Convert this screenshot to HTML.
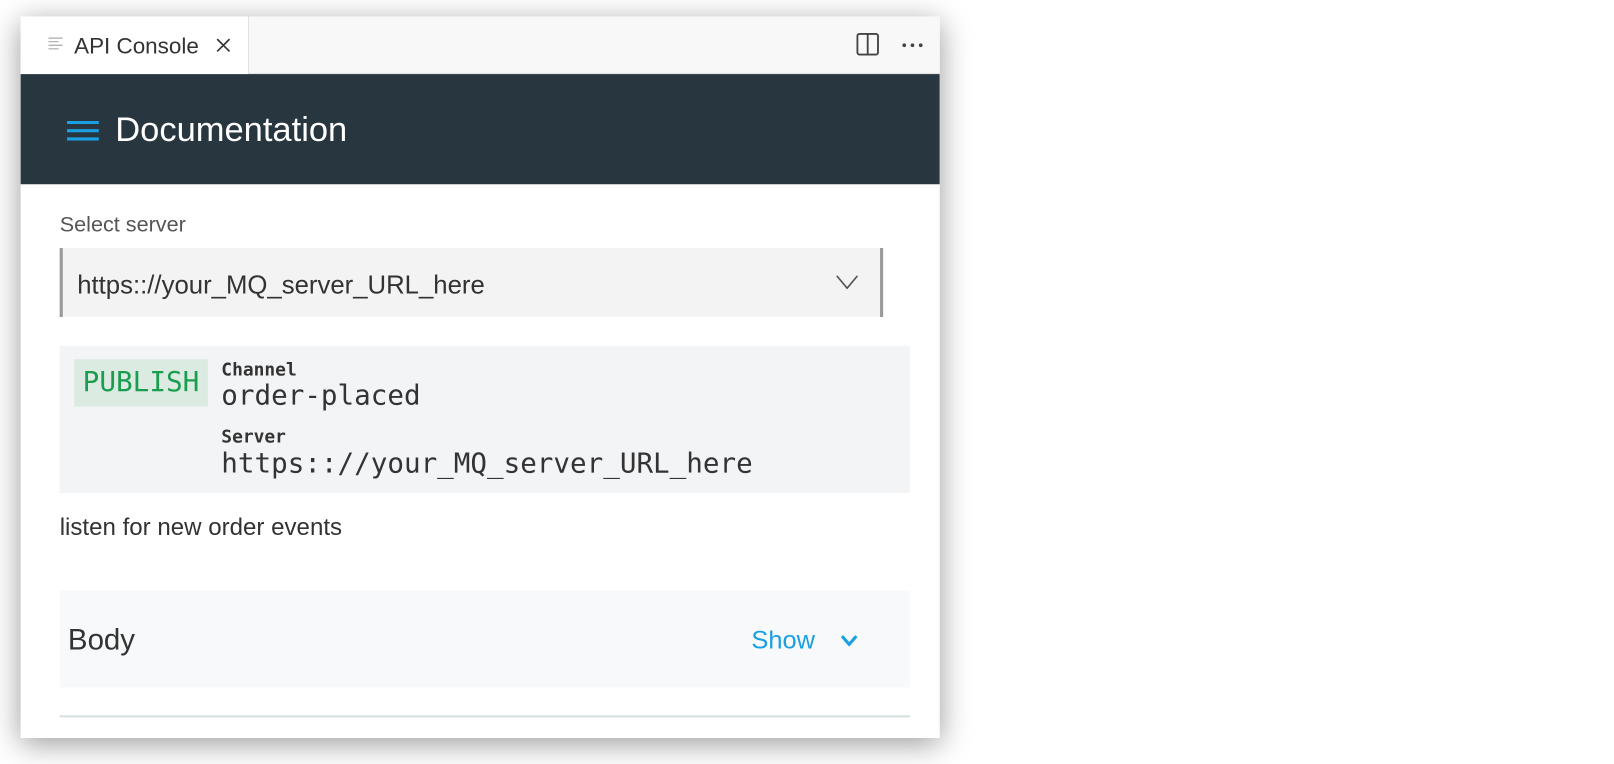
<!DOCTYPE html>
<html><head><style>
*{margin:0;padding:0;box-sizing:border-box}
body{width:1614px;height:764px;background:#fff;position:relative;overflow:hidden;font-family:"Liberation Sans",sans-serif}
.wrap{position:absolute;left:0;top:0;width:1568px;height:742px;transform:scale(1.0293);transform-origin:0 0}
.win{position:absolute;left:20px;top:16px;width:893px;height:701px;background:#fff;box-shadow:0 6px 28px rgba(0,0,0,.4);overflow:hidden}
.tabbar{position:absolute;left:0;top:0;width:893px;height:56px;background:#f8f8f8;border-bottom:1px solid #ddd}
.tab{position:absolute;left:0;top:0;width:222px;height:56px;background:#fff;border-right:1px solid #e0e0e0}
.hdr{position:absolute;left:0;top:56px;width:893px;height:107px;background:#283640}
.abs{position:absolute;white-space:nowrap}
.mono{font-family:"DejaVu Sans Mono","Liberation Mono",monospace}
</style></head><body>
<div class="wrap">
<div class="win">
 <div class="tabbar">
  <div class="tab">
   <svg class="abs" style="left:27px;top:20px" width="14" height="12"><g stroke="#aaa" stroke-width="1.2"><line x1="0" y1="1" x2="14" y2="1"/><line x1="0" y1="4.5" x2="10" y2="4.5"/><line x1="0" y1="8" x2="14" y2="8"/><line x1="0" y1="11.5" x2="10" y2="11.5"/></g></svg>
   <div class="abs" style="left:52px;top:16px;font-size:21.8px;color:#333">API Console</div>
   <svg class="abs" style="left:189px;top:20px" width="16" height="16"><path d="M2 2L14 14M14 2L2 14" stroke="#333" stroke-width="1.6"/></svg>
  </div>
  <svg class="abs" style="left:812px;top:16px" width="22" height="22"><rect x="1" y="1" width="20" height="20" rx="2" fill="none" stroke="#444" stroke-width="1.8"/><line x1="11" y1="1" x2="11" y2="21" stroke="#444" stroke-width="1.8"/></svg>
  <svg class="abs" style="left:856px;top:25px" width="22" height="6"><circle cx="2.5" cy="3" r="1.8" fill="#444"/><circle cx="10.5" cy="3" r="1.8" fill="#444"/><circle cx="18.5" cy="3" r="1.8" fill="#444"/></svg>
 </div>
 <div class="hdr">
  <svg class="abs" style="left:45px;top:44px" width="32" height="22"><g stroke="#1a9fe0" stroke-width="3"><line x1="0" y1="3" x2="31" y2="3"/><line x1="0" y1="11" x2="31" y2="11"/><line x1="0" y1="19" x2="31" y2="19"/></g></svg>
  <div class="abs" style="left:92px;top:36px;font-size:33.5px;color:#fff">Documentation</div>
 </div>
 <div class="abs" style="left:38px;top:191px;font-size:21px;color:#555">Select server</div>
 <div class="abs" style="left:38px;top:225px;width:800px;height:67px;background:#f3f3f3;border-left:3px solid #999;border-right:3px solid #999">
  <div class="abs" style="left:14px;top:22px;font-size:25px;color:#333">https:://your_MQ_server_URL_here</div>
  <svg class="abs" style="left:751px;top:26px" width="22" height="14"><path d="M1 1L11 13L21 1" fill="none" stroke="#555" stroke-width="1.6"/></svg>
 </div>
 <div class="abs" style="left:38px;top:320px;width:826px;height:143px;background:#f3f4f6">
  <div class="abs mono" style="left:14px;top:13px;width:130px;height:46px;background:#dcebe2;color:#1a9d4f;font-size:26.9px;line-height:46px;text-align:center">PUBLISH</div>
  <div class="abs mono" style="left:157px;top:14px;font-size:17.4px;font-weight:bold;color:#333">Channel</div>
  <div class="abs mono" style="left:157px;top:33px;font-size:26.8px;color:#333">order-placed</div>
  <div class="abs mono" style="left:157px;top:79px;font-size:17.4px;font-weight:bold;color:#333">Server</div>
  <div class="abs mono" style="left:157px;top:99px;font-size:26.8px;color:#333">https:://your_MQ_server_URL_here</div>
 </div>
 <div class="abs" style="left:38px;top:483px;font-size:23.4px;color:#333">listen for new order events</div>
 <div class="abs" style="left:38px;top:558px;width:826px;height:94px;background:#f8f9fa">
  <div class="abs" style="left:8px;top:32px;font-size:28.6px;color:#333">Body</div>
  <div class="abs" style="left:672px;top:35px;font-size:24.7px;color:#1a9fe0">Show</div>
  <svg class="abs" style="left:758px;top:42px" width="18" height="12"><path d="M2 2L9 10L16 2" fill="none" stroke="#1a9fe0" stroke-width="3"/></svg>
 </div>
 <div class="abs" style="left:38px;top:679px;width:826px;height:2px;background:#d4dfe0"></div>
</div>
</div>
</body></html>
